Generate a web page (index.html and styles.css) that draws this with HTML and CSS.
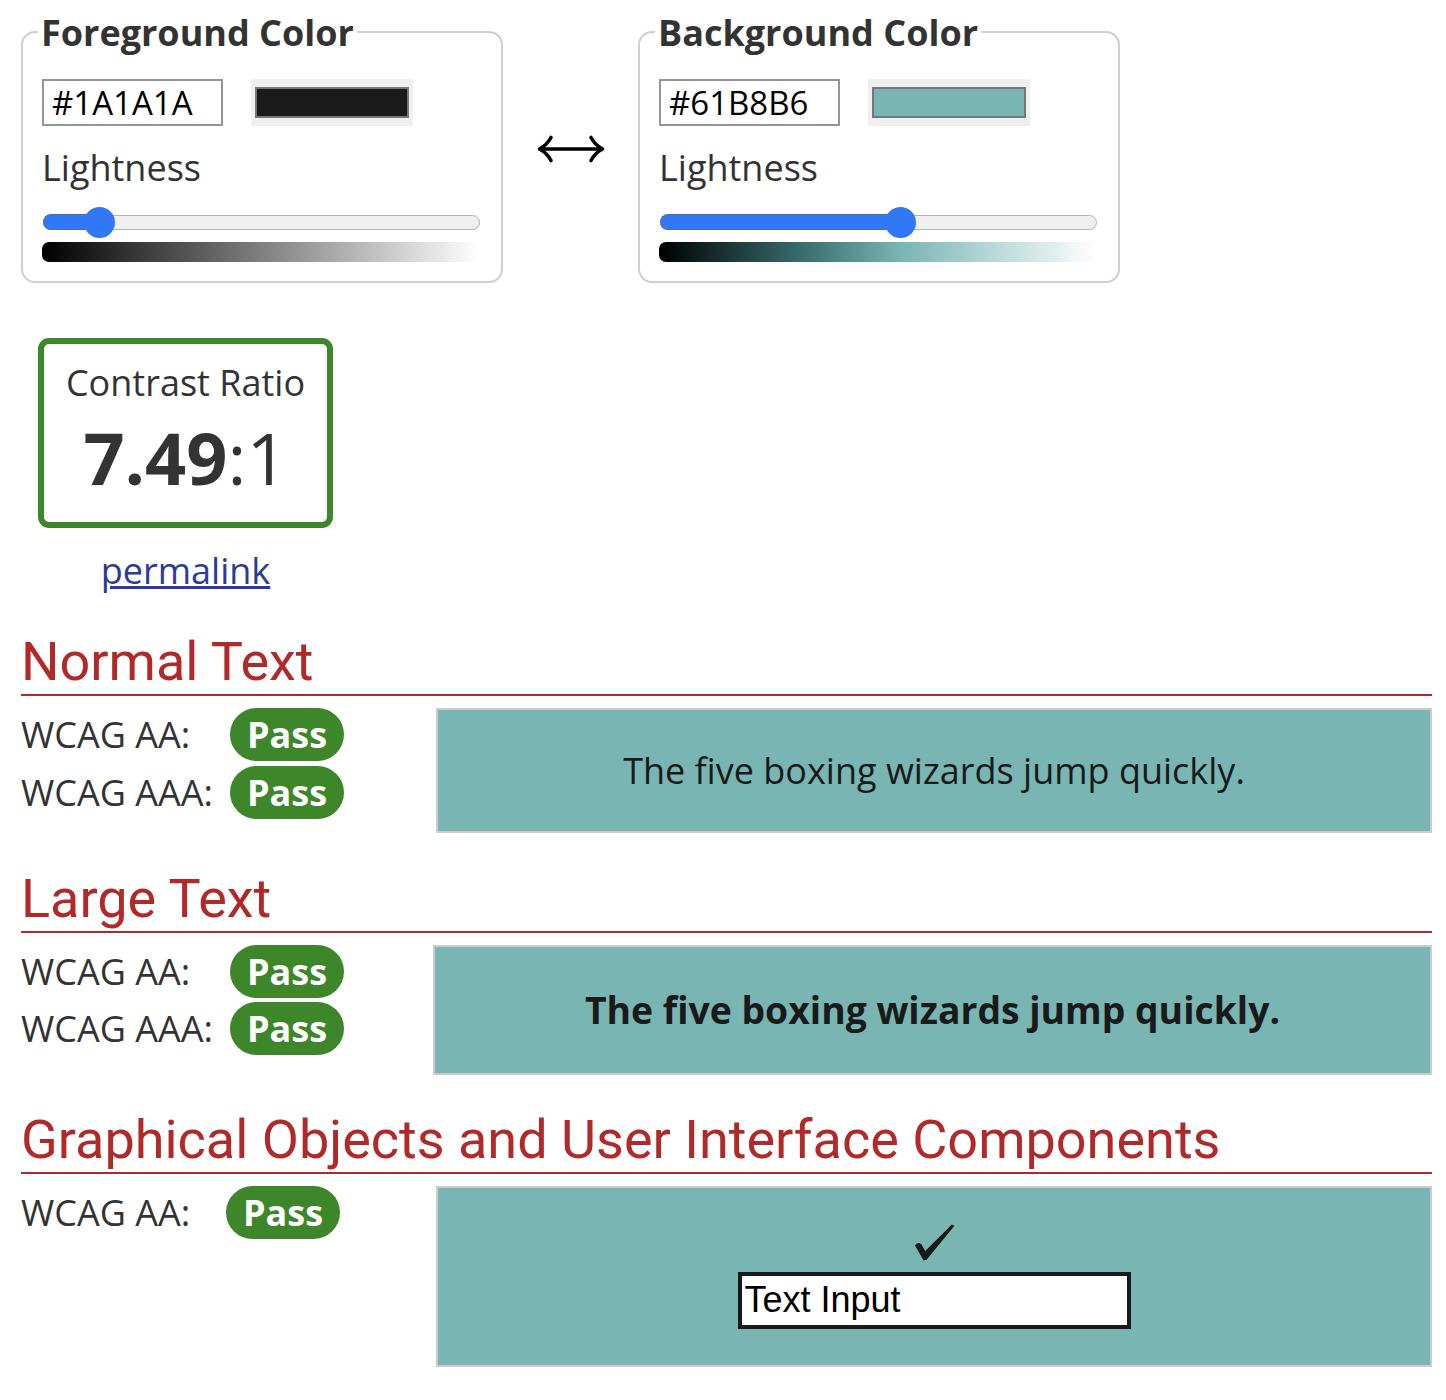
FILE: index.html
```html
<!DOCTYPE html>
<html lang="en">
<head>
<meta charset="utf-8">
<title>Contrast Checker</title>
<link rel="stylesheet" href="styles.css">
</head>
<body>
<main class="page">
  <div class="pickers">
    <fieldset class="picker">
      <legend class="picker-legend">Foreground Color</legend>
      <div class="picker-row">
        <input class="hex-input" type="text" value="#1A1A1A" aria-label="Foreground color hex value">
        <span class="swatch"><span class="swatch-fill swatch-fg"></span></span>
      </div>
      <div class="light-label">Lightness</div>
      <div class="slider">
        <div class="slider-track"><div class="slider-fill" style="width: 58px"></div></div>
        <div class="slider-thumb" style="left: 41.5px"></div>
      </div>
      <div class="gradient gradient-fg"></div>
    </fieldset>
    <div class="swap" aria-label="Swap colors">
      <svg class="swap-icon" width="68" height="28" viewBox="0 0 68 28" aria-hidden="true">
        <path d="M4 14 H64" stroke="#000" stroke-width="3.4" fill="none"/>
        <path d="M14 2.5 Q10 10 2.5 14 Q10 18 14 25.5" stroke="#000" stroke-width="3.6" fill="none" stroke-linecap="round" stroke-linejoin="round"/>
        <path d="M54 2.5 Q58 10 65.5 14 Q58 18 54 25.5" stroke="#000" stroke-width="3.6" fill="none" stroke-linecap="round" stroke-linejoin="round"/>
      </svg>
    </div>
    <fieldset class="picker">
      <legend class="picker-legend">Background Color</legend>
      <div class="picker-row">
        <input class="hex-input" type="text" value="#61B8B6" aria-label="Background color hex value">
        <span class="swatch"><span class="swatch-fill swatch-bg"></span></span>
      </div>
      <div class="light-label">Lightness</div>
      <div class="slider">
        <div class="slider-track"><div class="slider-fill" style="width: 242px"></div></div>
        <div class="slider-thumb" style="left: 225.5px"></div>
      </div>
      <div class="gradient gradient-bg"></div>
    </fieldset>
  </div>

  <div class="ratio-wrap">
    <div class="ratio-box">
      <div class="ratio-title">Contrast Ratio</div>
      <div class="ratio-value"><span class="ratio-strong">7.49</span>:1</div>
    </div>
    <a class="permalink" href="#">permalink</a>
  </div>

  <section class="result result-normal">
    <h2 class="result-title">Normal Text</h2>
    <div class="result-body">
      <div class="verdicts">
        <span class="verdict-label">WCAG AA:</span><span class="pill">Pass</span>
        <span class="verdict-label">WCAG AAA:</span><span class="pill">Pass</span>
      </div>
      <div class="sample sample-normal">The five boxing wizards jump quickly.</div>
    </div>
  </section>

  <section class="result result-large">
    <h2 class="result-title">Large Text</h2>
    <div class="result-body">
      <div class="verdicts verdicts-large">
        <span class="verdict-label">WCAG AA:</span><span class="pill">Pass</span>
        <span class="verdict-label">WCAG AAA:</span><span class="pill">Pass</span>
      </div>
      <div class="sample sample-large">The five boxing wizards jump quickly.</div>
    </div>
  </section>

  <section class="result result-graphic">
    <h2 class="result-title">Graphical Objects and User Interface Components</h2>
    <div class="result-body">
      <div class="verdicts verdicts-graphic">
        <span class="verdict-label">WCAG AA:</span><span class="pill">Pass</span>
      </div>
      <div class="sample sample-graphic">
        <svg class="check" width="41" height="37" viewBox="0 0 41 37" aria-hidden="true">
          <path d="M1 21.5 C2.5 18.5 6 18 7.5 20.5 L11.2 27 L37.8 0.6 L40.5 1.8 L12.6 35.8 L9.6 36.6 Z" fill="#1a1a1a"/>
        </svg>
        <input class="ui-input" type="text" value="Text Input" aria-label="Text Input">
      </div>
    </div>
  </section>
</main>
</body>
</html>
```

FILE: styles.css
```css
* {
  box-sizing: border-box;
}

html,
body {
  margin: 0;
  background: #ffffff;
}

body {
  font-family: "Open Sans", "DejaVu Sans", sans-serif;
  font-size: 36px;
  line-height: normal;
  color: #333333;
}

.page {
  width: 1446px;
  padding: 7.5px 14px 40px 21px;
}

/* ---------- colour pickers ---------- */

.pickers {
  display: flex;
  align-items: stretch;
}

.picker {
  width: 482px;
  min-width: 0;
  margin: 0;
  border: 2px solid #cfcfcf;
  border-radius: 14px;
  padding: 22px 21px 19px 19px;
}

.picker-legend {
  font-size: 36px;
  font-weight: 700;
  line-height: normal;
  color: #333333;
  padding: 0 3px;
  margin-left: -4px;
}

.picker-row {
  display: flex;
  gap: 28px;
}

.hex-input {
  width: 181px;
  height: 47px;
  margin: 0;
  padding: 0 8px;
  border: 2px solid #959595;
  border-radius: 0;
  background: #ffffff;
  font-family: "Open Sans", sans-serif;
  font-size: 33px;
  color: #000000;
  outline: none;
}

.swatch {
  display: block;
  width: 162px;
  height: 47px;
  padding: 8px 4px;
  background: #efefef;
}

.swatch-fill {
  display: block;
  height: 100%;
  border: 2px solid #767676;
}

.swatch-fg {
  background: #1b1b1b;
}

.swatch-bg {
  background: #78b5b3;
}

.light-label {
  margin-top: 17.5px;
}

.slider {
  position: relative;
  height: 31px;
  margin-top: 14.5px;
}

.slider-track {
  position: absolute;
  left: 1px;
  right: 0;
  top: 8px;
  height: 15px;
  border: 1.5px solid #b3b3b3;
  border-radius: 8px;
  background: #efefef;
}

.slider-fill {
  position: absolute;
  left: -1.5px;
  top: -1.5px;
  bottom: -1.5px;
  border: 1.5px solid #4b6fb2;
  border-right: none;
  border-radius: 8px 0 0 8px;
  background: #3178f6;
}

.slider-thumb {
  position: absolute;
  top: 0;
  width: 31px;
  height: 31px;
  border-radius: 50%;
  background: #3178f6;
}

.gradient {
  height: 20px;
  margin-top: 4.5px;
  border-radius: 7px;
}

.gradient-fg {
  background: linear-gradient(to right, #000000, #ffffff);
}

.gradient-bg {
  background: linear-gradient(to right, #000000 0%, #3e7574 35%, #78b5b3 55%, #ffffff 100%);
}

.swap {
  width: 135px;
  display: flex;
  align-items: center;
  justify-content: center;
  padding-top: 8px;
}

.swap-icon {
  display: block;
}

/* ---------- contrast ratio ---------- */

.ratio-wrap {
  width: 295px;
  margin: 55px 0 0 17px;
  text-align: center;
}

.ratio-box {
  height: 190px;
  border: 6px solid #3d8629;
  border-radius: 11px;
  padding-top: 14px;
}

.ratio-title {
  line-height: 49px;
}

.ratio-value {
  font-size: 72px;
  line-height: 98px;
  margin-top: 1px;
}

.ratio-strong {
  font-weight: 700;
}

.permalink {
  display: inline-block;
  margin-top: 18px;
  color: #2a3c97;
  text-decoration: underline;
}

/* ---------- results ---------- */

.result-title {
  width: 1411px;
  margin: 35px 0 0;
  padding-bottom: 1px;
  border-bottom: 2px solid #b02a2a;
  font-family: Roboto, "Liberation Sans", sans-serif;
  font-size: 54px;
  font-weight: 400;
  line-height: normal;
  color: #b02a2a;
}

.result-large .result-title {
  margin-top: 34px;
}

.result-graphic .result-title {
  margin-top: 33px;
}

.result-body {
  display: flex;
  align-items: flex-start;
  width: 1411px;
  margin-top: 12px;
}

.verdicts {
  flex: none;
  width: 415px;
  display: grid;
  grid-template-columns: 209px auto;
  row-gap: 4.5px;
  align-items: center;
  justify-items: start;
}

.verdicts-large {
  width: 412px;
}

.verdicts-graphic {
  grid-template-columns: 205px auto;
}

.verdict-label {
  line-height: 53px;
}

.pill {
  display: inline-block;
  padding: 0 17px;
  border-radius: 27px;
  background: #3d8629;
  color: #ffffff;
  font-weight: 700;
  line-height: 53px;
}

.sample {
  flex: 1;
  display: flex;
  align-items: center;
  justify-content: center;
  border: 2px solid #cccccc;
  background: #78b5b3;
  color: #1a1a1a;
}

.sample-normal {
  height: 124.5px;
}

.sample-large {
  height: 130px;
  font-size: 37.3px;
  font-weight: 700;
}

.sample-graphic {
  height: 181.5px;
  flex-direction: column;
  gap: 11px;
}

.check {
  display: block;
}

.ui-input {
  width: 393px;
  height: 57px;
  margin: 0;
  padding: 0 3px;
  border: 4px solid #1a1a1a;
  border-radius: 0;
  background: #ffffff;
  font-family: "Liberation Sans", Arial, sans-serif;
  font-size: 36px;
  color: #000000;
  outline: none;
}
```
